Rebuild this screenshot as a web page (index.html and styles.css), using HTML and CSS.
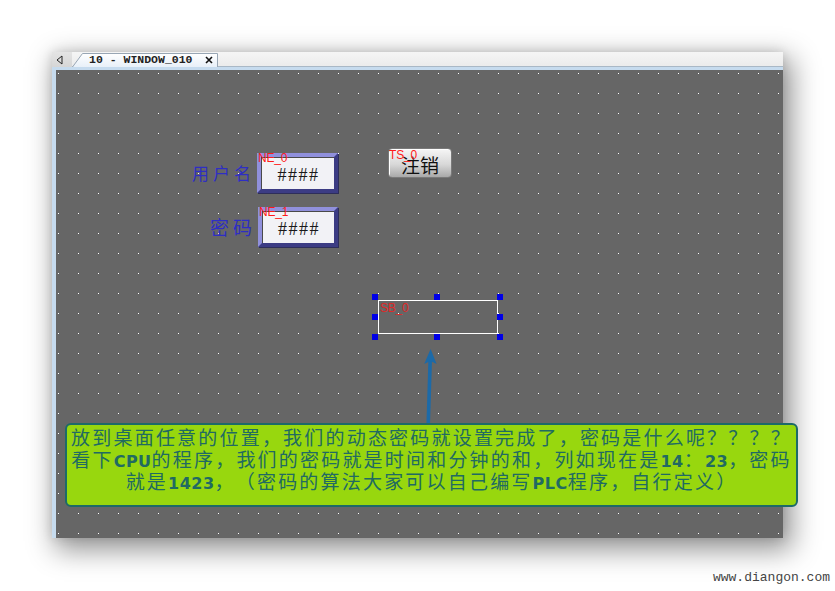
FILE: index.html
```html
<!DOCTYPE html>
<html lang="zh">
<head>
<meta charset="utf-8">
<title>10 - WINDOW_010</title>
<link rel="stylesheet" href="styles.css">
</head>
<body>
<div class="window">
  <div class="tabbar">
    <span class="tab-nav"><svg width="7" height="10" viewBox="0 0 7 10"><path d="M6 1 L1 5 L6 9 Z" fill="none" stroke="#222" stroke-width="1"/></svg></span>
    <div class="tab">
      <svg class="tab-shape" width="146" height="15" viewBox="0 0 146 15">
        <defs><linearGradient id="tg" x1="0" y1="0" x2="0" y2="1"><stop offset="0" stop-color="#ffffff"/><stop offset="1" stop-color="#e8f0f8"/></linearGradient></defs>
        <path d="M0.5 15 L10.5 1.5 H145.5 V15" fill="url(#tg)" stroke="#98a6b4" stroke-width="1"/>
      </svg>
      <span class="tab-title">10 - WINDOW_010</span>
      <svg class="tab-close" width="8" height="8" viewBox="0 0 8 8"><path d="M1 1 L7 7 M7 1 L1 7" stroke="#111" stroke-width="1.6"/></svg>
    </div>
    <div class="tab-rest"></div>
  </div>
  <div class="canvas">
    <span class="label label-user">用户名</span>
    <div class="field field-user"><span class="tag tag-field">NE_0</span><span class="mask">####</span></div>
    <span class="label label-pass">密码</span>
    <div class="field field-pass"><span class="tag tag-field">NE_1</span><span class="mask">####</span></div>
    <div class="button"><span class="tag tag-btn">TS_0</span><span class="btn-text">注销</span></div>
    <div class="sbox">
      <span class="tag tag-sb">SB_0</span>
      <span class="h h-tl"></span><span class="h h-tm"></span><span class="h h-tr"></span>
      <span class="h h-ml"></span><span class="h h-mr"></span>
      <span class="h h-bl"></span><span class="h h-bm"></span><span class="h h-br"></span>
    </div>
    <svg class="arrow" width="30" height="80" viewBox="0 0 30 80">
      <path d="M12.2 80 L14.2 15" stroke="#1c6aa8" stroke-width="3.6" fill="none"/>
      <path d="M14.6 4 L20.6 19 L14.4 16 L8.2 19 Z" fill="#1c6aa8"/>
    </svg>
    <div class="callout">
      <div class="line">放到桌面任意的位置，我们的动态密码就设置完成了，密码是什么呢？？？？</div>
      <div class="line">看下<b>CPU</b>的程序，我们的密码就是时间和分钟的和，列如现在是<b>14</b>：<b>23</b>，密码</div>
      <div class="line">就是<b>1423</b>，（密码的算法大家可以自己编写<b>PLC</b>程序，自行定义）</div>
    </div>
  </div>
</div>
<div class="watermark">www.diangon.com</div>
</body>
</html>
```
FILE: styles.css
```css
* { box-sizing: border-box; }
html, body { margin: 0; }
body {
  width: 835px;
  height: 591px;
  overflow: hidden;
  background: #ffffff;
  padding: 52px 0 0 52px;
  font-family: "Noto Sans CJK SC", sans-serif;
}
.window {
  width: 731px;
  height: 486px;
  display: flex;
  flex-direction: column;
  background: #eeeeee;
  box-shadow: 6px 9px 26px 3px rgba(0,0,0,0.42), 0 0 10px rgba(0,0,0,0.12);
}
.tabbar {
  height: 15px;
  display: flex;
  align-items: stretch;
  background: linear-gradient(#f5f5f5, #ebebeb);
  box-shadow: inset 0 -1px 0 #a9b8c6;
}
.tab-nav {
  width: 20px;
  display: flex;
  align-items: center;
  padding-left: 4px;
  background: linear-gradient(#e4e4e4, #d6d6d6);
}
.tab {
  width: 146px;
  position: relative;
  display: flex;
  align-items: center;
  padding-left: 17px;
  gap: 12px;
}
.tab-shape { position: absolute; left: 0; top: 0; }
.tab-title {
  position: relative;
  font: bold 11.5px/13px "Liberation Mono", monospace;
  color: #222;
  white-space: pre;
}
.tab-close { position: relative; }
.tab-rest { flex: 1; }
.canvas {
  flex: 1;
  position: relative;
  border-top: 3px solid #c6dbee;
  border-left: 4px solid #c6dbee;
  background-color: #666666;
  background-image: conic-gradient(from 270deg at 1px 1px, #ffffff 0 90deg, transparent 0);
  background-size: 20px 20px;
  background-position: 2px 3px;
}
.label {
  position: absolute;
  color: #2e2ec4;
  line-height: 1;
  white-space: nowrap;
}
.label-user { left: 136px; top: 94px; font-size: 17px; letter-spacing: 4px; }
.label-pass { left: 154px; top: 147px; font-size: 19px; letter-spacing: 4px; }
.field {
  position: absolute;
  height: 40px;
  border: 4px solid;
  border-color: #9090dc #3c3c84 #3c3c84 #9090dc;
  background: #f2f2f6;
  box-shadow: inset 1px 1px 0 #4a4a4a, 1px 1px 0 #2e2e5a;
  display: flex;
  align-items: center;
  justify-content: center;
}
.field-user { left: 201px; top: 83px; width: 81px; }
.field-pass { left: 202px; top: 137px; width: 80px; }
.mask {
  font: 18px/1 "Liberation Serif", serif;
  letter-spacing: 1.5px;
  color: #1a1a1a;
  margin-top: 3px;
  margin-left: 2px;
}
.tag {
  position: absolute;
  color: #ff1a1a;
  font-family: "Liberation Sans Narrow", "Liberation Sans", sans-serif;
  font-size: 12px;
  line-height: 1;
  letter-spacing: -0.2px;
  white-space: nowrap;
}
.tag-field { left: -3px; top: -5px; }
.button {
  position: absolute;
  left: 332px;
  top: 78px;
  width: 64px;
  height: 30px;
  border: 1px solid #7a7a7a;
  border-radius: 4px;
  background: linear-gradient(#f6f6f6, #d8d8d8 55%, #a9a9a9);
  box-shadow: inset 1px 1px 0 #ffffff;
  display: flex;
  align-items: center;
  justify-content: center;
}
.btn-text {
  font-size: 19px;
  line-height: 1;
  color: #111;
  margin-top: 2px;
}
.tag-btn { left: 0; top: 0; }
.sbox {
  position: absolute;
  left: 322px;
  top: 230px;
  width: 120px;
  height: 34px;
  border: 1px solid #ffffff;
}
.tag-sb { left: 1px; top: 1px; color: #e02828; }
.h {
  position: absolute;
  width: 6px;
  height: 6px;
  background: #0000e6;
}
.h-tl { left: -7px; top: -7px; }
.h-tm { left: 55px; top: -7px; }
.h-tr { left: 118px; top: -7px; }
.h-ml { left: -7px; top: 13px; }
.h-mr { left: 118px; top: 13px; }
.h-bl { left: -7px; top: 33px; }
.h-bm { left: 55px; top: 33px; }
.h-br { left: 118px; top: 33px; }
.arrow { position: absolute; left: 360px; top: 275px; }
.callout {
  position: absolute;
  left: 9px;
  top: 353px;
  width: 733px;
  height: 84px;
  padding-top: 1px;
  background: #98d70e;
  border: 2px solid #1d6a68;
  border-radius: 6px;
  color: #216a62;
  font-size: 19px;
  letter-spacing: 2.2px;
  text-align: center;
  white-space: nowrap;
  text-spacing-trim: space-all;
}
.callout .line {
  height: 22px;
  line-height: 22px;
}
.callout b {
  font-family: "DejaVu Sans", "Liberation Sans", sans-serif;
  font-weight: bold;
  font-size: 16px;
  letter-spacing: 0.5px;
}
.watermark {
  margin-top: 32px;
  text-align: right;
  padding-right: 5px;
  font: 13px/16px "Liberation Mono", monospace;
  color: #444;
}
```
